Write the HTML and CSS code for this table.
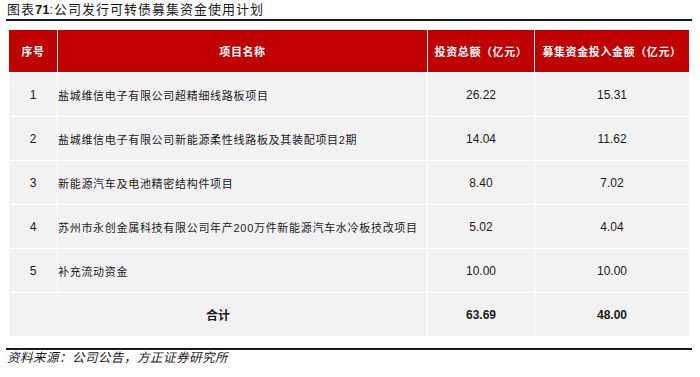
FILE: index.html
```html
<!DOCTYPE html>
<html lang="zh">
<head>
<meta charset="utf-8">
<link rel="stylesheet" href="styles.css">
</head>
<body>
<div class="wrap">
  <div class="title">图表<span class="num">71</span>:公司发行可转债募集资金使用计划</div>
  <table class="tbl">
    <colgroup>
      <col class="c1"><col class="c2"><col class="c3"><col class="c4">
    </colgroup>
    <thead>
      <tr><th>序号</th><th>项目名称</th><th>投资总额（亿元）</th><th>募集资金投入金额（亿元）</th></tr>
    </thead>
    <tbody>
      <tr><td class="ctr">1</td><td class="name">盐城维信电子有限公司超精细线路板项目</td><td class="ctr">26.22</td><td class="ctr">15.31</td></tr>
      <tr><td class="ctr">2</td><td class="name">盐城维信电子有限公司新能源柔性线路板及其装配项目2期</td><td class="ctr">14.04</td><td class="ctr">11.62</td></tr>
      <tr><td class="ctr">3</td><td class="name">新能源汽车及电池精密结构件项目</td><td class="ctr">8.40</td><td class="ctr">7.02</td></tr>
      <tr><td class="ctr">4</td><td class="name">苏州市永创金属科技有限公司年产200万件新能源汽车水冷板技改项目</td><td class="ctr">5.02</td><td class="ctr">4.04</td></tr>
      <tr><td class="ctr">5</td><td class="name">补充流动资金</td><td class="ctr">10.00</td><td class="ctr">10.00</td></tr>
      <tr class="total"><td class="ctr" colspan="2">合计</td><td class="ctr">63.69</td><td class="ctr">48.00</td></tr>
    </tbody>
  </table>
  <div class="source">资料来源：公司公告，方正证券研究所</div>
</div>
</body>
</html>
```
FILE: styles.css
```css
html, body {
  margin: 0;
  padding: 0;
  background: #ffffff;
}
body {
  font-family: "Liberation Sans", "Noto Sans CJK SC", sans-serif;
  color: #1a1a1a;
}
.wrap {
  width: 686px;
  padding-left: 6px;
}
.title {
  font-size: 13px;
  line-height: 19px;
  height: 19px;
  letter-spacing: 1px;
  padding-left: 1px;
  border-bottom: 2px solid #1a1a1a;
  box-sizing: content-box;
}
.title .num {
  font-size: 13px;
  font-weight: bold;
  letter-spacing: 0;
}
.tbl {
  margin: 8px 0 0 2px;
  width: 681px;
  border-collapse: collapse;
  table-layout: fixed;
  font-size: 11px;
}
.c1 { width: 49px; }
.c2 { width: 370px; }
.c3 { width: 107px; }
.c4 { width: 155px; }
.tbl th, .tbl td {
  border: 1px solid #ffffff;
  height: 43px;
  padding: 0;
  box-sizing: border-box;
}
.tbl th {
  background: #c00000;
  color: #ffffff;
  font-weight: bold;
  letter-spacing: 0.6px;
  text-align: center;
}
.tbl td {
  background: #f2f2f2;
  color: #1a1a1a;
}
.tbl tbody tr td {
  height: 44px;
}
.ctr {
  text-align: center;
  font-size: 12px;
}
.name {
  padding-left: 1px;
  letter-spacing: 0.7px;
  white-space: nowrap;
}
.total td {
  font-weight: bold;
}
.source {
  margin-top: 11px;
  border-top: 2px solid #1a1a1a;
  font-size: 12.5px;
  line-height: 17px;
  font-style: italic;
  letter-spacing: 0.5px;
  padding-left: 1px;
}
```
